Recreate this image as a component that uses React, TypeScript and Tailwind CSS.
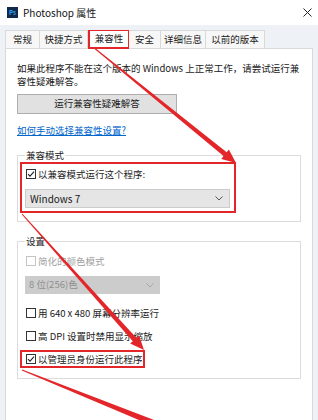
import React from "react"

const font = "font-['Noto_Sans_CJK_SC','Noto_Sans',sans-serif]"

function Check({ checked = false, disabled = false }: { checked?: boolean; disabled?: boolean }) {
  return (
    <span
      className={`flex h-[10px] w-[10px] shrink-0 items-center justify-center border bg-white ${
        disabled ? "border-[#c4c4c4]" : "border-[#333]"
      }`}
    >
      {checked && (
        <svg width="8" height="8" viewBox="0 0 8 8">
          <path d="M1 4.2 L3 6.2 L7 1.6" fill="none" stroke="#222" strokeWidth="1.1" />
        </svg>
      )}
    </span>
  )
}

function Chevron({ color }: { color: string }) {
  return (
    <svg width="8" height="5" viewBox="0 0 8 5">
      <path d="M0.5 0.5 L4 4 L7.5 0.5" fill="none" stroke={color} strokeWidth="1" />
    </svg>
  )
}

function Row({ children, disabled = false, checked = false }: { children: React.ReactNode; disabled?: boolean; checked?: boolean }) {
  return (
    <div className={`flex h-[12px] items-center gap-[2px] ${disabled ? "text-[#a0a0a0]" : "text-[#1a1a1a]"}`}>
      <Check checked={checked} disabled={disabled} />
      <span className="leading-[12px]">{children}</span>
    </div>
  )
}

const tabs = [
  { label: "常规", w: "w-[35px]" },
  { label: "快捷方式", w: "w-[48px]" },
  { label: "兼容性", w: "w-[41px]", active: true },
  { label: "安全", w: "w-[32px]" },
  { label: "详细信息", w: "w-[45px]" },
  { label: "以前的版本", w: "w-[59px]" },
]

export default function App() {
  return (
    <div className={`relative h-[420px] w-[318px] overflow-hidden bg-[#eef1f5] ${font} text-[9.5px] text-[#1a1a1a]`}>
      {/* title bar */}
      <div className="flex h-[25px] items-center bg-white pl-[7px] pr-[6px]">
        <div className="flex h-[11px] w-[11px] items-center justify-center bg-[#0f2a4a] text-[6px] font-bold leading-none text-[#31a8ff]">
          Ps
        </div>
        <span className="ml-[5px] text-[10px] leading-none text-[#111]">Photoshop 属性</span>
        <div className="ml-auto">
          <svg width="9" height="9" viewBox="0 0 9 9">
            <path d="M0.5 0.5 L8.5 8.5 M8.5 0.5 L0.5 8.5" stroke="#222" strokeWidth="1" />
          </svg>
        </div>
      </div>

      {/* tabs */}
      <div className="mt-[5px] flex h-[18px] pl-[5px]">
        {tabs.map((t) => (
          <div
            key={t.label}
            className={`flex ${t.w} items-center justify-center border-t border-r border-[#d9d9d9] first:border-l ${
              t.active ? "relative z-10 -mb-px border-2 border-[#e3262a] bg-white" : "bg-[#f7f7f7]"
            }`}
          >
            <span className="leading-none">{t.label}</span>
          </div>
        ))}
      </div>

      {/* panel */}
      <div className="ml-[5px] h-[380px] w-[308px] border border-[#d9d9d9] bg-white pl-[11px] pt-[13px]">
        <p className="w-[290px] leading-[13px]">
          如果此程序不能在这个版本的 Windows 上正常工作，请尝试运行兼容性疑难解答。
        </p>
        <button className="mt-[6px] flex h-[20px] w-[160px] items-center justify-center border border-[#adadad] bg-[#e1e1e1] leading-none">
          运行兼容性疑难解答
        </button>
        <div className="mt-[10px] leading-[13px] text-[#0066cc] underline">如何手动选择兼容性设置?</div>

        <fieldset className="mt-[12px] w-[284px] border border-[#dcdcdc] pb-[8px] pl-[2px]">
          <legend className="ml-[5px] px-[1px] leading-[12px]">兼容模式</legend>
          <div className="mt-[1px] w-[216px] border-2 border-[#e3262a] pb-[3px] pl-[4px] pt-[4px]">
            <Row checked>以兼容模式运行这个程序:</Row>
            <div className="-ml-px mt-[9px] flex h-[19px] w-[205px] items-center justify-between border border-[#cccccc] bg-[#e5e5e5] pl-[4px] pr-[6px]">
              <span className="text-[10px] leading-none">Windows 7</span>
              <Chevron color="#555" />
            </div>
          </div>
        </fieldset>

        <fieldset className="mt-[13px] w-[284px] border border-[#dcdcdc] pb-[10px] pl-[2px]">
          <legend className="ml-[5px] px-[1px] leading-[12px]">设置</legend>
          <div className="ml-[6px] mt-[8px]">
            <Row disabled>简化的颜色模式</Row>
          </div>
          <div className="ml-[5px] mt-[9px] flex h-[18px] w-[135px] items-center justify-between bg-[#cccccc] pl-[4px] pr-[6px] text-[#8f8f8f]">
            <span className="leading-none">8 位(256)色</span>
            <Chevron color="#a8a8a8" />
          </div>
          <div className="ml-[6px] mt-[13px]">
            <Row>用 640 x 480 屏幕分辨率运行</Row>
          </div>
          <div className="ml-[6px] mt-[11px]">
            <Row>高 DPI 设置时禁用显示缩放</Row>
          </div>
          <div className="mt-[8px] w-[125px] border-2 border-[#e3262a] py-[1px] pl-[4px]">
            <Row checked>以管理员身份运行此程序</Row>
          </div>
        </fieldset>
      </div>

      {/* annotation arrows */}
      <svg className="pointer-events-none absolute inset-0" width="318" height="420" viewBox="0 0 318 420">
        <polygon
          fill="#e3262a"
          points="93.3,46.6 226.7,152.3 228.9,149.5 236,163 221.3,158.9 223.5,156.1 92.7,47.4"
        />
        <polygon
          fill="#e3262a"
          points="22.4,213.7 136.5,337.9 139.1,335.6 144,350 130.2,343.6 132.8,341.3 21.6,214.3"
        />
        <polygon fill="#e3262a" points="22.2,369.5 175,428 172,434 21.8,370.5" />
      </svg>
    </div>
  )
}
